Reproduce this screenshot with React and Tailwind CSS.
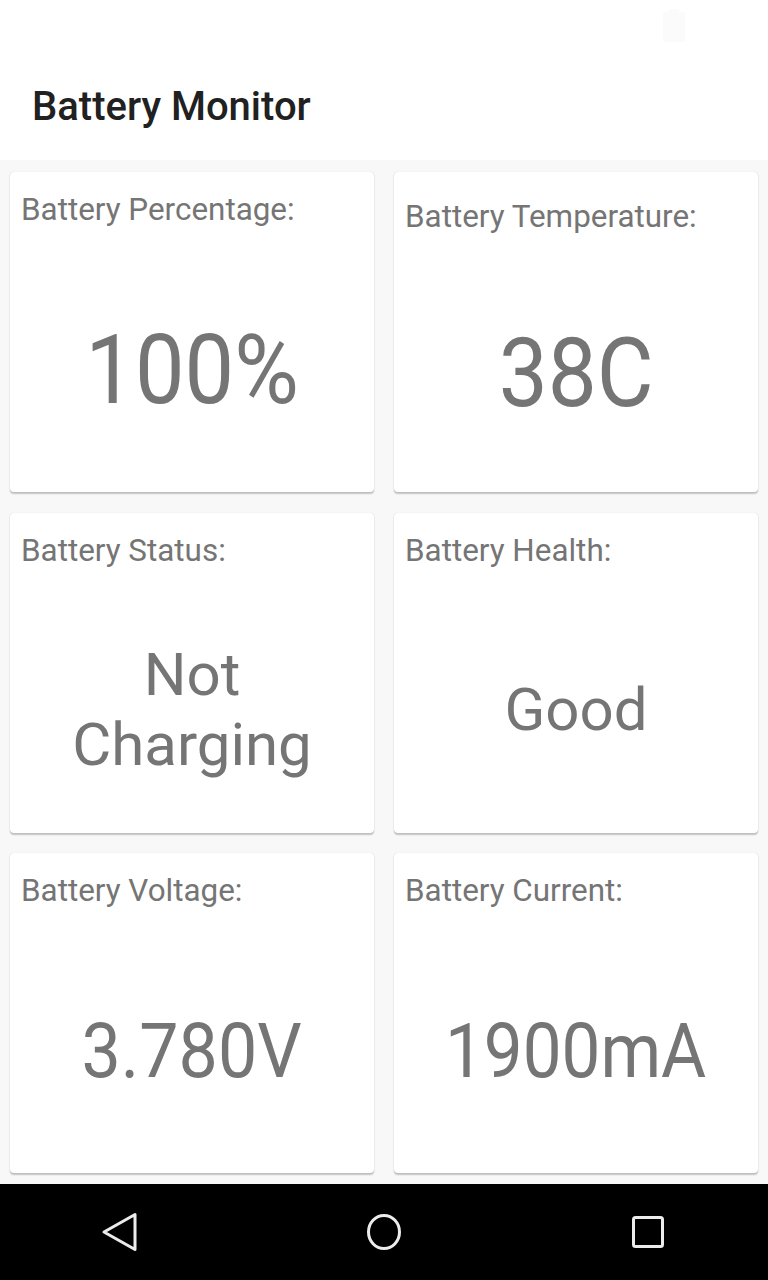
import React from 'react';

// Readings shown in the grid
const stats = [
  { label: 'Battery Percentage:', value: '100%', size: 'text-[96px] leading-none scale-x-[0.92]' },
  { label: 'Battery Temperature:', value: '38C', size: 'text-[96px] leading-none scale-x-[0.91]', shift: true },
  { label: 'Battery Status:', value: 'Not Charging', size: 'text-[60px] leading-[70px]' },
  { label: 'Battery Health:', value: 'Good', size: 'text-[60px] leading-[70px]' },
  { label: 'Battery Voltage:', value: '3.780V', size: 'text-[76px] leading-none scale-x-[0.92]' },
  { label: 'Battery Current:', value: '1900mA', size: 'text-[76px] leading-none scale-x-[0.91]' },
];

function StatCard({ label, value, size, shift }) {
  return (
    <div
      className={`h-[320px] flex flex-col bg-white rounded-[4px] shadow-[0_0_1px_rgba(0,0,0,0.15),0_1.5px_1.5px_rgba(0,0,0,0.22)] ${
        shift ? 'pt-[7px]' : ''
      }`}
    >
      <div className="pt-[19px] px-[11px] text-[31.4px] leading-[38px] text-[#757575]">{label}</div>
      <div className="flex-1 flex flex-col items-center justify-center pt-[18px] px-4">
        <span className={`block text-center text-[#757575] ${size}`}>{value}</span>
      </div>
    </div>
  );
}

export default function App() {
  return (
    <div className="w-[768px] h-[1280px] flex flex-col bg-white" style={{ fontFamily: 'Roboto, "Noto Sans", sans-serif' }}>
      {/* Status bar */}
      <div className="h-[48px] flex items-start justify-end pr-[83px] pt-[9px]">
        <div className="flex flex-col items-center">
          <div className="w-[10px] h-[3px] bg-[#fbfbfb] rounded-t-[1px]" />
          <div className="w-[22px] h-[30px] bg-[#fbfbfb] rounded-[2px]" />
        </div>
      </div>

      {/* Toolbar */}
      <header className="h-[112px] flex items-center pl-[32px] pt-[5px]">
        <h1 className="text-[40px] font-medium text-[#212121] leading-none">Battery Monitor</h1>
      </header>

      {/* Cards */}
      <main className="flex-1 bg-[#f8f8f8] pt-[12px] px-[10px] grid grid-cols-2 gap-x-[20px] gap-y-[20.5px] content-start">
        {stats.map((s) => (
          <StatCard key={s.label} {...s} />
        ))}
      </main>

      {/* Navigation bar */}
      <nav className="h-[96px] bg-black flex items-center justify-between px-[100px]">
        <svg width="40" height="40" viewBox="0 0 40 40" fill="none" stroke="#ececec" strokeWidth="3" strokeLinejoin="round">
          <path d="M4 20 L35 2.5 L35 37.5 Z" />
        </svg>
        <svg width="40" height="40" viewBox="0 0 40 40" fill="none" stroke="#ececec" strokeWidth="3">
          <ellipse cx="20" cy="20" rx="15.5" ry="16.5" />
        </svg>
        <svg width="40" height="40" viewBox="0 0 40 40" fill="none" stroke="#ececec" strokeWidth="3">
          <rect x="5.5" y="5.5" width="29" height="29" rx="2" />
        </svg>
      </nav>
    </div>
  );
}
